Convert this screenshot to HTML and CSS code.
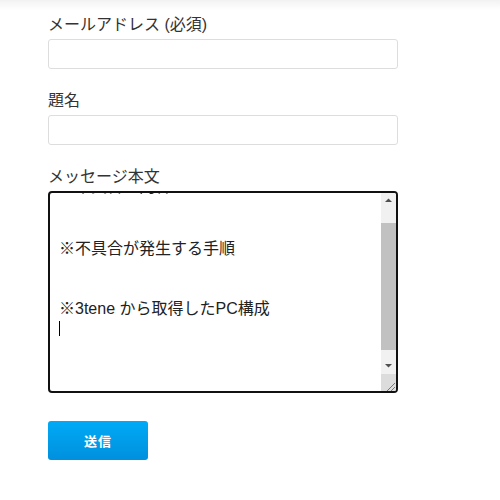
FILE: index.html
```html
<!DOCTYPE html>
<html lang="ja">
<head>
<meta charset="utf-8">
<title>お問い合わせ</title>
<link rel="stylesheet" href="styles.css">
</head>
<body>
<div class="topbar"></div>
<form class="form">
  <div class="field">
    <label class="label">メールアドレス (必須)</label>
    <div class="input"></div>
  </div>
  <div class="field">
    <label class="label">題名</label>
    <div class="input"></div>
  </div>
  <div class="field">
    <label class="label">メッセージ本文</label>
    <div class="msg">
      <div class="msg-text">
        <div class="lines">
          <div class="line first">※不具合の内容</div>
          <div class="line"></div>
          <div class="line"></div>
          <div class="line">※不具合が発生する手順</div>
          <div class="line"></div>
          <div class="line"></div>
          <div class="line">※3tene から取得したPC構成</div>
          <div class="line"><span class="caret"></span></div>
        </div>
      </div>
      <div class="scrollbar">
        <div class="sb-btn up"><svg width="15" height="15" viewBox="0 0 15 15"><path d="M4 9 L11 9 L7.5 5.5 Z" fill="#505050"/></svg></div>
        <div class="sb-gap-top"></div>
        <div class="sb-thumb"></div>
        <div class="sb-gap-bottom"></div>
        <div class="sb-btn down"><svg width="15" height="16" viewBox="0 0 15 16"><path d="M4 6 L11 6 L7.5 9.5 Z" fill="#505050"/></svg></div>
        <div class="sb-corner"><svg width="15" height="17" viewBox="0 0 15 17"><path d="M14 9 L6 17 M14 13 L10 17" stroke="#777" stroke-width="1"/></svg></div>
      </div>
    </div>
  </div>
  <button type="button" class="submit">送信</button>
</form>
</body>
</html>
```

FILE: styles.css
```css
html, body {
  margin: 0;
  padding: 0;
  background: #fff;
}
body {
  font-family: "Liberation Sans", "Noto Sans CJK JP", sans-serif;
  color: #333;
}
.topbar {
  height: 10px;
  background: linear-gradient(to bottom, #f2f2f2, #ffffff);
}
.form {
  padding: 3px 0 0 48px;
  width: 350px;
  display: flex;
  flex-direction: column;
}
.field {
  display: flex;
  flex-direction: column;
  margin-bottom: 20px;
}
.label {
  font-size: 16px;
  line-height: 24px;
  height: 24px;
  margin-bottom: 2px;
  color: #333;
}
.input {
  height: 28px;
  border: 1px solid #dddddd;
  border-radius: 3px;
  background: #fff;
}
.msg {
  height: 198px;
  border: 2px solid #111;
  border-radius: 4px;
  display: flex;
  overflow: hidden;
  background: #fff;
}
.msg-text {
  flex: 1;
  overflow: hidden;
  padding-left: 9px;
}
.lines {
  margin-top: -14px;
}
.line {
  height: 20px;
  line-height: 20px;
  font-size: 16px;
  color: #222;
  white-space: nowrap;
}
.line.first {
  line-height: 15px;
}
.caret {
  display: inline-block;
  width: 1px;
  height: 15px;
  background: #000;
  vertical-align: -2px;
}
.scrollbar {
  width: 15px;
  display: flex;
  flex-direction: column;
  background: #f1f1f1;
}
.sb-btn svg, .sb-corner svg {
  display: block;
}
.sb-btn.up { height: 15px; }
.sb-gap-top { height: 15px; }
.sb-thumb {
  height: 127px;
  background: #c1c1c1;
}
.sb-gap-bottom { height: 8px; }
.sb-btn.down { height: 16px; }
.sb-corner {
  height: 17px;
  background: #dcdcdc;
}
.submit {
  margin-top: 8px;
  width: 100px;
  height: 39px;
  border: none;
  border-radius: 3px;
  background: linear-gradient(to bottom, #00aaf6, #0090de);
  color: #fff;
  font-family: "Noto Sans CJK JP", sans-serif;
  font-weight: bold;
  font-size: 13px;
  letter-spacing: 1px;
  padding: 0;
}
```
